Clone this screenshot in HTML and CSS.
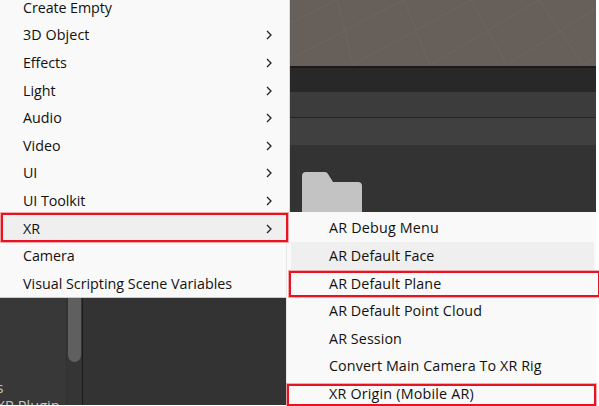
FILE: index.html
```html
<!DOCTYPE html>
<html lang="en">
<head>
<meta charset="utf-8">
<title>Editor context menu</title>
<link rel="stylesheet" href="styles.css">
</head>
<body>
<main class="desktop">
  <section class="editor">
    <svg class="scene" viewBox="0 0 595.5 66" aria-hidden="true">
      <path d="M290 23 337 0 345 31 353 65M290 59 404 0 416 31 430 65M353 65 471 0 488 31 507 65M430 65 539 0 560 31 583 65M507 65 596 8M583 65 596 57"/>
    </svg>
    <div class="divider"></div>
    <div class="tabs"></div>
    <div class="toolbar"></div>
    <div class="project">
      <div class="tree"><p>s</p><p class="plugin">XR Plugin</p></div>
      <div class="scroll"><div class="thumb"></div></div>
      <div class="assets">
        <svg class="folder" viewBox="0 0 60 60" aria-hidden="true"><path d="M0 60V4Q0 0 4 0H23Q25 0 26 2L31 10H56Q60 10 60 14V60Z"/></svg>
      </div>
    </div>
  </section>

  <nav class="menu main-menu">
    <div class="item"><span class="snug">Create Empty</span></div>
    <div class="item"><span class="wide">3D Object</span><svg class="chev" viewBox="0 0 6 10"><path d="M1 1 5 5 1 9"/></svg></div>
    <div class="item"><span class="snug">Effects</span><svg class="chev" viewBox="0 0 6 10"><path d="M1 1 5 5 1 9"/></svg></div>
    <div class="item"><span>Light</span><svg class="chev" viewBox="0 0 6 10"><path d="M1 1 5 5 1 9"/></svg></div>
    <div class="item"><span>Audio</span><svg class="chev" viewBox="0 0 6 10"><path d="M1 1 5 5 1 9"/></svg></div>
    <div class="item"><span>Video</span><svg class="chev" viewBox="0 0 6 10"><path d="M1 1 5 5 1 9"/></svg></div>
    <div class="item"><span class="snug">UI</span><svg class="chev" viewBox="0 0 6 10"><path d="M1 1 5 5 1 9"/></svg></div>
    <div class="item"><span class="snug">UI Toolkit</span><svg class="chev" viewBox="0 0 6 10"><path d="M1 1 5 5 1 9"/></svg></div>
    <div class="item hover"><span>XR</span><svg class="chev" viewBox="0 0 6 10"><path d="M1 1 5 5 1 9"/></svg></div>
    <div class="item"><span class="snug">Camera</span></div>
    <div class="item"><span>Visual Scripting Scene Variables</span></div>
  </nav>

  <nav class="menu sub-menu">
    <div class="item"><span class="wider">AR Debug Menu</span></div>
    <div class="item hover"><span class="wide">AR Default Face</span></div>
    <div class="item"><span class="wide">AR Default Plane</span></div>
    <div class="item"><span class="wide">AR Default Point Cloud</span></div>
    <div class="item"><span class="wide">AR Session</span></div>
    <div class="item"><span class="wide">Convert Main Camera To XR Rig</span></div>
    <div class="item"><span class="wider">XR Origin (Mobile AR)</span></div>
  </nav>

  <div class="mark mark-xr"></div>
  <div class="mark mark-plane"></div>
  <div class="mark mark-origin"></div>
</main>
</body>
</html>
```

FILE: styles.css
```css
* { box-sizing: border-box; }
body { margin: 0; background: #fff; font-family: "Open Sans", "Noto Sans", sans-serif; }
.desktop { position: relative; width: 599px; height: 406px; overflow: hidden; }
.editor { width: 595.5px; height: 405px; display: flex; flex-direction: column; background: #333; overflow: hidden; }
.scene { display: block; height: 66px; flex: none; background: #675f59; }
.scene path { fill: none; stroke: #6b6762; stroke-width: 1; }
.divider { height: 26px; flex: none; background: #282828; border-top: 2px solid #1a1a1a; }
.tabs { height: 26px; flex: none; background: #3c3c3c; border-bottom: 1px solid #232323; }
.toolbar { height: 27px; flex: none; background: #404040; }
.project { flex: 1; display: flex; min-height: 0; }
.tree { width: 67px; background: #383838; border-right: 1px solid #303030; padding-top: 233px; color: #c4c4c4; font-size: 14.6px; line-height: 18px; overflow: hidden; }
.tree p { margin: 0 0 0 -3.5px; white-space: nowrap; }
.scroll { width: 16px; padding-left: 1px; background: #353535; border-right: 1px solid #1c1c1c; }
.thumb { width: 13px; height: 217px; border-radius: 7px; background: #5f5f5f; }
.assets { flex: 1; padding: 27px 0 0 219px; }
.folder { display: block; width: 60px; height: 60px; fill: #c3c3c3; }

.menu { position: absolute; background: #f9f9f9; color: #111; }
.main-menu { left: 0; top: -6px; width: 290px; height: 304px; border-right: 1px solid #dcdcdc; border-bottom: 1px solid #ccc; }
.sub-menu { left: 286px; top: 212px; width: 309.5px; height: 194px; padding-top: 2.6px; border-left: 1px solid #e6e6e6; }
.item { height: 27.6px; display: flex; align-items: center; justify-content: space-between; padding: 0 17px 0 23px; font-size: 14.3px; line-height: 20px; white-space: nowrap; }
.sub-menu .item { margin: 0 2px 0 4px; padding-left: 38px; }
.hover { background: #efefef; }
.snug { letter-spacing: -0.08px; }
.wide { letter-spacing: 0.09px; }
.wider { letter-spacing: 0.2px; }
.chev { width: 6px; height: 10px; fill: none; stroke: #222; stroke-width: 1.3; overflow: visible; }

.mark { position: absolute; border: 2px solid #e81220; box-shadow: 0 0 0 1px rgba(232, 18, 32, 0.35); }
.mark-xr { left: 1px; top: 213px; width: 287px; height: 29px; }
.mark-plane { left: 289px; top: 271px; width: 311px; height: 26px; }
.mark-origin { left: 287px; top: 384px; width: 309px; height: 22px; }
```
